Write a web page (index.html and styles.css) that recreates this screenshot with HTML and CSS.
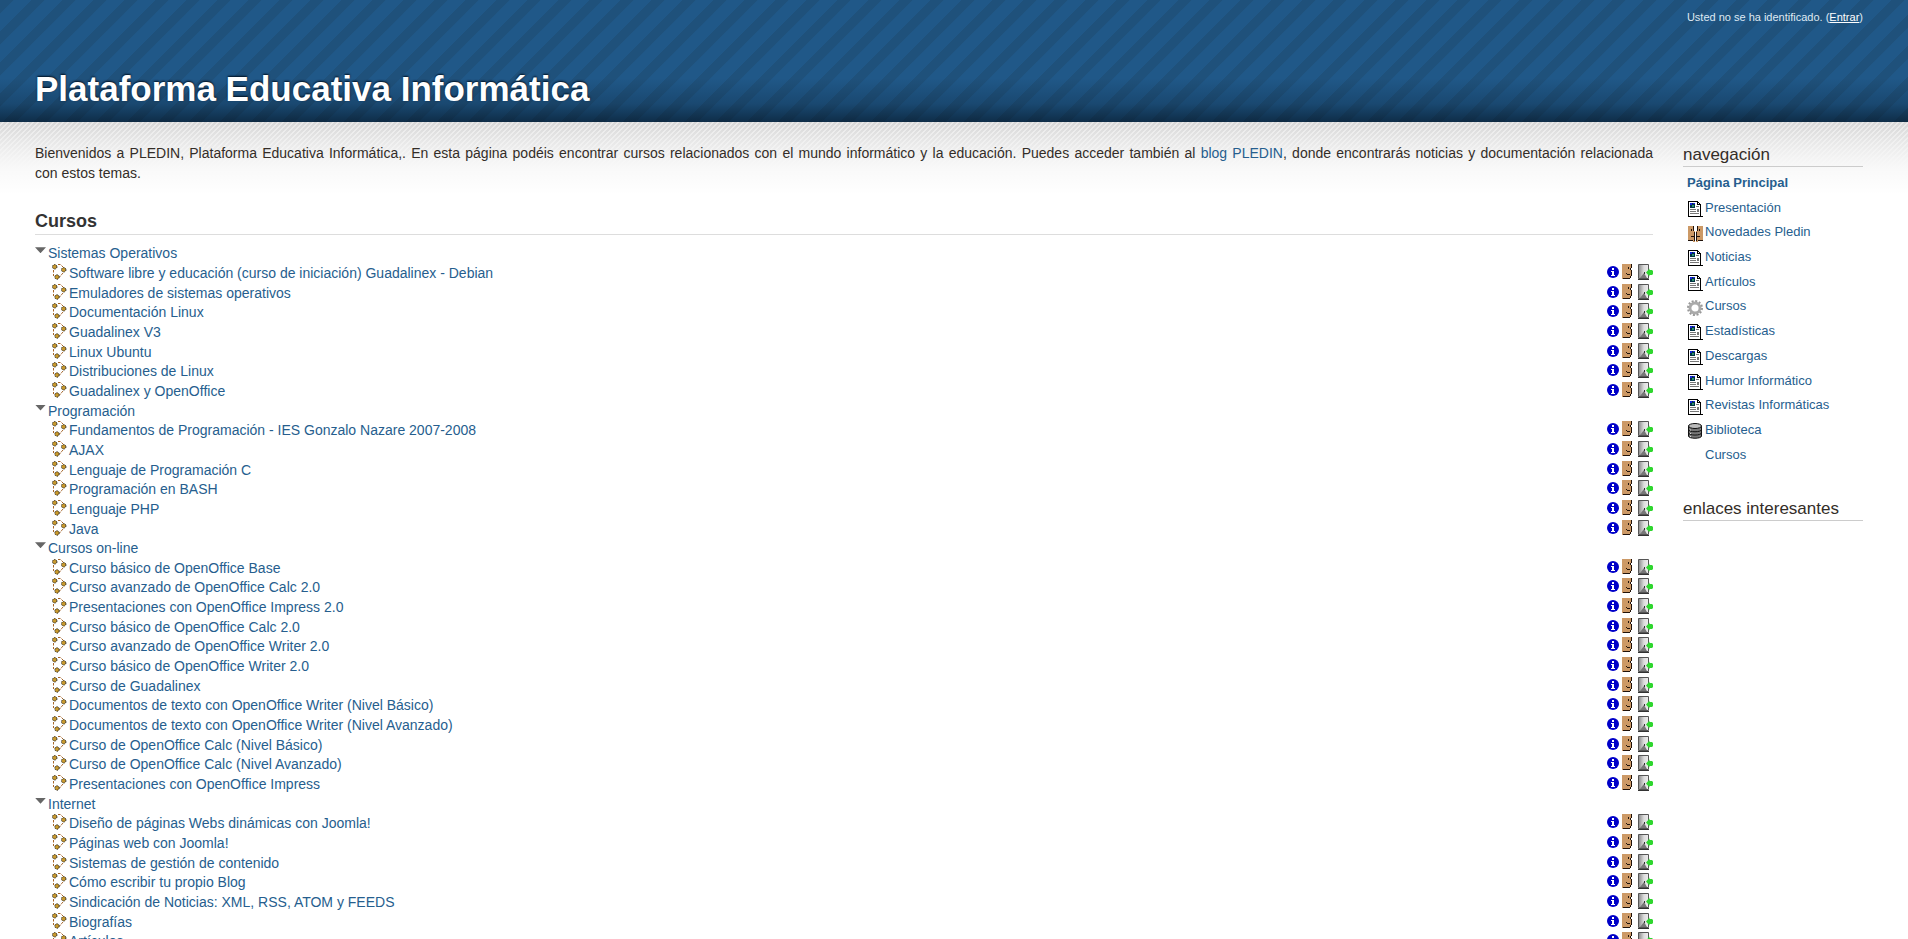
FILE: index.html
```html
<!DOCTYPE html>
<html lang="es">
<head>
<meta charset="utf-8">
<title>Plataforma Educativa Informática</title>
<link rel="stylesheet" href="styles.css">
</head>
<body>
<svg class="sprite" aria-hidden="true">
  <linearGradient id="metal" x1="0" x2="1"><stop offset="0" stop-color="#888"/><stop offset=".55" stop-color="#ddd"/><stop offset="1" stop-color="#eee"/></linearGradient>
  <symbol id="course" viewBox="0 0 15 16">
    <path d="M6 .5h3M9.500 1.500l1.500 1.500M1.500 6v3M1.500 10v2M11 9L7.500 13" fill="none" stroke="#a5652a" stroke-dasharray="2.500 1"/>
    <g fill="#c99a2e" stroke="#111" stroke-dasharray="1.200 1"><circle cx="2.700" cy="2.800" r="2.200"/><circle cx="11.700" cy="5.800" r="2.200"/><circle cx="5" cy="13" r="2.200"/></g>
  </symbol>
  <symbol id="info" viewBox="0 0 12 12"><circle cx="6" cy="6" r="6" fill="#0000c8"/><path d="M5 2h2v2H5zM4 5h3v4h1v1H4V9h1V6H4z" fill="#fff"/></symbol>
  <symbol id="face" viewBox="0 0 11 16" shape-rendering="crispEdges">
    <path d="M0 0h9v5l1 3-1 1v3l-1 2H6v1H0z" fill="#cc9966"/>
    <path d="M9 0h1v4H9zM8 4h1v2H8zM9 6h1v6H9zM8 12h1v2H8zM1 14h7v1H1zM6 3h1v2H6zM4 9h1v1H4zM5 10h3v1H5z" fill="#20120a"/>
  </symbol>
  <symbol id="door" viewBox="0 0 15 16">
    <path d="M.5.5h10v14H.5z" fill="url(#metal)" stroke="#555"/><path d="M2 14L6 9l3 5z" fill="#777"/><path d="M6 8h1v2H6zM0 15h11v1H0z" fill="#333"/>
    <path d="M8 8.500L11.500 4.500v1.500H14l1 1v3l-1 1h-2.500v1.500z" fill="#2fd62f"/>
  </symbol>
  <symbol id="page" viewBox="0 0 15 16" shape-rendering="crispEdges">
    <path d="M0 0h10l3 3v12h2v1H0z"/><path d="M1 1h8v3h3v11H1zM10 1l2 2h-2z" fill="#fff"/>
    <path d="M2 2h5v5H2z" fill="#003040"/><path d="M2 2h2v2H2zM5 2h2v1H5z" fill="#1020e0"/><path d="M4 4h2v2H4z" fill="#2c9070"/>
    <path d="M8 5h3v1H8zM2 8h6v1H2zM2 10h6v1H2zM2 12h9v1H2zM9 8h2v3H9z" fill="#777"/>
  </symbol>
  <symbol id="people" viewBox="0 0 15 16" shape-rendering="crispEdges">
    <path d="M0 0h15v14h-5v2H5v-2H0z" fill="#cc9966"/>
    <path d="M5 0h1v5H5zM9 0h1v5H9zM6 6h1v9H6zM8 6h1v9H8zM3 3h1v2H3zM11 3h1v2h-1zM3 10h3v1H3zM9 10h3v1H9zM0 14h5v1H0zM10 14h5v1h-5z" fill="#20120a"/>
    <path d="M6 0h3v5H6zM7 5h1v11H7z" fill="#fff"/>
  </symbol>
  <symbol id="gear" viewBox="0 0 16 16">
    <circle cx="8" cy="8" r="6.800" fill="none" stroke="#999" stroke-width="2.400" stroke-dasharray="2 1.560"/>
    <circle cx="8" cy="8" r="5" fill="none" stroke="#aaa" stroke-width="2.800"/>
  </symbol>
  <symbol id="database" viewBox="0 0 15 16">
    <path d="M1 3v10c0 3 13 3 13 0V3z" fill="#777" stroke="#111"/><ellipse cx="7.500" cy="3" rx="6.500" ry="2.500" fill="#bbb" stroke="#111"/>
    <path d="M1 6.500c0 3 13 3 13 0M1 9.800c0 3 13 3 13 0" fill="none" stroke="#111"/><path d="M3 6.500v1M3 10v1M3 13v1" stroke="#ddd"/>
  </symbol>
</svg>
<header class="header">
  <p class="login">Usted no se ha identificado. (<a href="#">Entrar</a>)</p>
  <h1>Plataforma Educativa Informática</h1>
</header>
<div class="page">
  <main class="content">
    <p class="intro">Bienvenidos a PLEDIN, Plataforma Educativa Informática,. En esta página podéis encontrar cursos relacionados con el mundo informático y la educación. Puedes acceder también al <a href="#">blog PLEDIN</a>, donde encontrarás noticias y documentación relacionada con&nbsp;estos&nbsp;temas.</p>
    <h2>Cursos</h2>
    <div id="courses"></div>
  </main>
  <aside class="sidebar">
    <nav class="block">
      <h3>navegación</h3>
      <ul class="menu" id="menu"><li><a class="current" href="#">Página Principal</a></li></ul>
    </nav>
    <section class="block"><h3>enlaces interesantes</h3></section>
  </aside>
</div>
<script src="app.js"></script>
</body>
</html>
```
FILE: styles.css
```css
* { box-sizing: border-box; }
body {
  margin: 0;
  height: 100vh;
  overflow: hidden;
  background: #fff;
  color: #332d28;
  font: 14px/1.405 "Liberation Sans", Arial, Helvetica, sans-serif;
}
h1, h2, h3, p, ul { margin: 0; padding: 0; font-weight: normal; }
ul { list-style: none; }
a { color: #265e8e; text-decoration: none; }
svg { display: block; }
.sprite { position: absolute; width: 0; height: 0; }
.header {
  height: 122px;
  padding: 10px 45px 0 35px;
  background:
    linear-gradient(transparent 64%, rgba(0, 10, 20, .2) 85%, rgba(0, 10, 20, .55)),
    linear-gradient(135deg, #1f517b 21%, #205888 23% 50%, #1f517b 51% 71%, #205888 73%) 0 0 / 31px 31px;
}
.login { color: #dfe9f2; font-size: 11px; line-height: 14px; text-align: right; }
.login a { color: #fff; text-decoration: underline; }
.header h1 {
  margin-top: 41px;
  color: #fff;
  font-size: 35px;
  font-weight: bold;
  line-height: 48px;
  text-shadow: 0 -1px 2px #001020;
}
.page {
  display: flex;
  gap: 30px;
  padding: 21px 45px 0 35px;
  background:
    linear-gradient(rgba(255, 255, 255, 0), #fff 72px),
    linear-gradient(transparent, #eee 50px),
    linear-gradient(135deg, #d6d6d6 22%, #e9e9e9 22% 50%, #d6d6d6 50% 72%, #e9e9e9 72%) 0 0 / 5px 5px;
}
.content { flex: 1; }
.intro { padding-top: 1px; text-align: justify; }
.content h2 {
  margin: 25px 0 9px;
  border-bottom: 1px solid #ddd;
  color: #333;
  font-size: 18px;
  font-weight: bold;
  line-height: 26px;
}
.category { display: flex; gap: 2px; }
.toggle {
  width: 11px;
  height: 6px;
  margin-top: 3px;
  background: #666;
  clip-path: polygon(0 0, 100% 0, 50% 100%);
}
.course { display: flex; padding-left: 17px; gap: 2px; }
.course .icon { width: 15px; height: 16px; }
.course .title { flex: 1; }
.actions { display: flex; align-items: center; height: 16px; }
.actions .info { width: 12px; height: 12px; margin-right: 3px; }
.actions .face { width: 11px; height: 16px; margin-right: 5px; }
.actions .door { width: 15px; height: 16px; }
.sidebar { width: 180px; }
.block { margin-bottom: 30px; }
.block h3 {
  border-bottom: 1px solid #ccc;
  font-size: 17px;
  line-height: 23px;
}
.menu { padding: 4px 0 0 4px; font-size: 13px; line-height: 1.9; }
.menu li { display: flex; align-items: center; gap: 2px; }
.menu .icon { width: 16px; height: 16px; margin-top: 2px; }
.menu .current { font-weight: bold; }
```
FILE: app.js
```javascript
const categories = [
  ["Sistemas Operativos", ["Software libre y educación (curso de iniciación) Guadalinex - Debian", "Emuladores de sistemas operativos", "Documentación Linux", "Guadalinex V3", "Linux Ubuntu", "Distribuciones de Linux", "Guadalinex y OpenOffice"]],
  ["Programación", ["Fundamentos de Programación - IES Gonzalo Nazare 2007-2008", "AJAX", "Lenguaje de Programación C", "Programación en BASH", "Lenguaje PHP", "Java"]],
  ["Cursos on-line", ["Curso básico de OpenOffice Base", "Curso avanzado de OpenOffice Calc 2.0", "Presentaciones con OpenOffice Impress 2.0", "Curso básico de OpenOffice Calc 2.0", "Curso avanzado de OpenOffice Writer 2.0", "Curso básico de OpenOffice Writer 2.0", "Curso de Guadalinex", "Documentos de texto con OpenOffice Writer (Nivel Básico)", "Documentos de texto con OpenOffice Writer (Nivel Avanzado)", "Curso de OpenOffice Calc (Nivel Básico)", "Curso de OpenOffice Calc (Nivel Avanzado)", "Presentaciones con OpenOffice Impress"]],
  ["Internet", ["Diseño de páginas Webs dinámicas con Joomla!", "Páginas web con Joomla!", "Sistemas de gestión de contenido", "Cómo escribir tu propio Blog", "Sindicación de Noticias: XML, RSS, ATOM y FEEDS", "Biografías", "Artículos"]]
];
const menu = [
  ["page", "Presentación"], ["people", "Novedades Pledin"], ["page", "Noticias"], ["page", "Artículos"],
  ["gear", "Cursos"], ["page", "Estadísticas"], ["page", "Descargas"], ["page", "Humor Informático"],
  ["page", "Revistas Informáticas"], ["database", "Biblioteca"], ["", "Cursos"]
];
const icon = (name, cls) => `<svg class="${cls}" aria-hidden="true">${name && `<use href="#${name}"/>`}</svg>`;
const course = title => `<li class="course">${icon("course", "icon")}<span class="title"><a href="#">${title}</a></span>
  <span class="actions">${icon("info", "info")}${icon("face", "face")}${icon("door", "door")}</span></li>`;
document.getElementById("courses").innerHTML = categories.map(([name, list]) =>
  `<div class="category"><span class="toggle"></span><a href="#">${name}</a></div><ul>${list.map(course).join("")}</ul>`).join("");
document.getElementById("menu").insertAdjacentHTML("beforeend",
  menu.map(([name, title]) => `<li>${icon(name, "icon")}<a href="#">${title}</a></li>`).join(""));
```
